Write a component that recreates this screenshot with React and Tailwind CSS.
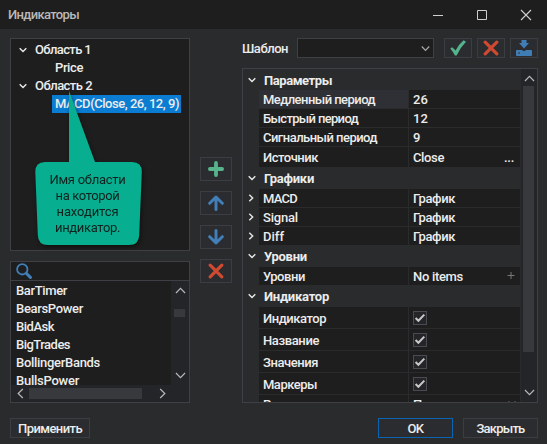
import { useLayoutEffect, useRef } from "react";

// Text whose tracking is adjusted so that it spans exactly `w` pixels.
function T({ w, children, className = "" }) {
  const ref = useRef(null);
  useLayoutEffect(() => {
    const el = ref.current;
    el.style.letterSpacing = "0px";
    const natural = el.getBoundingClientRect().width;
    el.style.letterSpacing = `${(w - natural) / String(children).length}px`;
  }, [w, children]);
  return (
    <span ref={ref} className={`inline-block shrink-0 whitespace-pre ${className}`}>
      {children}
    </span>
  );
}

function Chevron({ dir = "down", size = 8, color = "#e8e8e8", sw = 1.4 }) {
  const d = {
    down: "M0.7 2.2 L4 5.6 L7.3 2.2",
    up: "M0.7 5.8 L4 2.4 L7.3 5.8",
    right: "M2.3 0.7 L5.7 4 L2.3 7.3",
    left: "M5.7 0.7 L2.3 4 L5.7 7.3",
  }[dir];
  return (
    <svg width={size} height={size} viewBox="0 0 8 8" fill="none" stroke={color} strokeWidth={(sw * 8) / size} className="shrink-0">
      <path d={d} />
    </svg>
  );
}

const ScrollArrow = ({ dir }) => <Chevron dir={dir} size={11} color="#b8b8b8" sw={1.2} />;

const Cross = () => (
  <svg width="16" height="16" viewBox="0 0 16 16" stroke="#cf4a30" strokeWidth="3.2" strokeLinecap="round" fill="none">
    <path d="M2.2 2.2 L13.8 13.8 M13.8 2.2 L2.2 13.8" />
  </svg>
);
const Tick = () => (
  <svg width="16" height="16" viewBox="0 0 16 16" fill="#55b38c">
    <path d="M0.3 8.6 L2.2 7.2 L5.6 10.4 Q8.6 4.6 13.6 0.3 L16 1.8 Q10.2 7.6 6.6 15.6 L4.9 15.6 Q3 11.8 0.3 8.6 Z" />
  </svg>
);
const Plus = () => (
  <svg width="16" height="16" viewBox="0 0 16 16" stroke="#58b38c" strokeWidth="3.8" strokeLinecap="round">
    <path d="M8 1.9 V14.1 M1.9 8 H14.1" />
  </svg>
);
const Arrow = ({ down }) => (
  <svg width="16" height="16" viewBox="0 0 16 16" stroke="#427fb8" strokeWidth="3" strokeLinecap="round" strokeLinejoin="round" fill="none" className={down ? "rotate-180" : ""}>
    <path d="M8 14.5 V2.2 M1.7 8.3 L8 2 L14.3 8.3" />
  </svg>
);
const Download = () => (
  <svg width="16" height="16" viewBox="0 0 16 16" fill="#417db5">
    <path d="M5.5 0 H10.5 V3 H13 L8 8.6 L3 3 H5.5 Z" />
    <path d="M0.8 10 H5.8 L8 11.3 L10.2 10 H15.2 Q16 10 16 10.8 V15.2 Q16 16 15.2 16 H0.8 Q0 16 0 15.2 V10.8 Q0 10 0.8 10 Z" />
    <circle cx="3" cy="13" r="0.8" fill="#2a2b2f" />
  </svg>
);

function ToolButton({ className = "", children }) {
  return (
    <div className={`flex items-center justify-center border border-[#3c3d42] bg-[#2b2c30] ${className}`}>{children}</div>
  );
}

function Section({ name, w, h }) {
  return (
    <div className={`flex items-center pl-[5px] ${h}`}>
      <Chevron />
      <T w={w} className="mt-[2px] ml-[8px] font-bold">{name}</T>
    </div>
  );
}

function Check() {
  return (
    <div className="mb-[2px] flex h-[14px] w-[14px] items-center justify-center border border-[#4a4b52] bg-[#242528]">
      <svg width="12" height="12" viewBox="0 0 12 12" fill="none" stroke="#c8c8c8" strokeWidth="2">
        <path d="M1.6 6 L4.4 8.8 L10.3 2.6" />
      </svg>
    </div>
  );
}

function Prop({ name, w, h = "h-[18px]", expand, active, last, children }) {
  return (
    <div className={`flex shrink-0 ${last ? "" : "mb-px"}`}>
      <div className={`flex w-[16px] items-center pl-[4px] ${h}`}>{expand && <Chevron dir="right" />}</div>
      <div className={`mr-px flex w-[149px] items-center pt-[2px] pl-[4px] ${h} ${active ? "bg-[#2f3035]" : "bg-[#1e1e1e]"}`}>
        <T w={w}>{name}</T>
      </div>
      <div className={`flex w-[111px] items-center bg-[#1e1e1e] pt-[2px] pl-[4px] ${h}`}>{children}</div>
    </div>
  );
}

function TreeNode({ name, w }) {
  return (
    <div className="flex h-[18px] items-center pl-[8px]">
      <Chevron />
      <T w={w} className="ml-[8px]">{name}</T>
    </div>
  );
}

const indicators = [
  ["BarTimer", 51],
  ["BearsPower", 67],
  ["BidAsk", 38],
  ["BigTrades", 54],
  ["BollingerBands", 84],
  ["BullsPower", 63],
];

export default function App() {
  return (
    <div className="relative flex h-[444px] w-[547px] flex-col overflow-hidden bg-[#2a2b2d] font-['Roboto','Liberation_Sans',sans-serif] text-[13px] leading-[18px] font-medium text-[#ececec]">
      <header className="flex h-[29px] shrink-0 items-center bg-[#1e1e1e] pr-[14px] pl-[8px]">
        <T w={71} className="mt-px text-[#b9b9b9]">Индикаторы</T>
        <svg width="100" height="12" viewBox="0 0 100 12" fill="none" stroke="#d0d0d0" className="ml-auto">
          <path d="M0 6.5 H10" />
          <path d="M44.5 1.5 H53.5 V10.5 H44.5 Z" />
          <path d="M88 1 L98 11 M98 1 L88 11" strokeWidth="1.1" />
        </svg>
      </header>

      <main className="flex h-[374px] pt-[9px] pl-[10px]">
        <section className="flex w-[180px] flex-col gap-[10px]">
          <div className="h-[213px] shrink-0 border border-[#3f4045] bg-[#1e1e1e] pt-[2px]">
            <TreeNode name="Область 1" w={56} />
            <div className="flex h-[18px] items-center pl-[44px]"><T w={28}>Price</T></div>
            <TreeNode name="Область 2" w={57} />
            <div className="ml-[41px] flex h-[18px] w-[129px] items-center bg-[#0a7dd2] pl-[3px]">
              <T w={124}>MACD(Close, 26, 12, 9)</T>
            </div>
          </div>
          <div className="flex h-[142px] shrink-0 flex-col border border-[#3f4045] bg-[#1e1e1e]">
            <div className="h-[19px] shrink-0 border-b border-[#3f4045] pt-px pl-[5px]">
              <svg width="16" height="16" viewBox="0 0 16 16" fill="none" stroke="#417fb8">
                <circle cx="6.3" cy="6.3" r="5.2" strokeWidth="1.8" />
                <path d="M10.5 10.5 L14.4 14.4" strokeWidth="3" strokeLinecap="round" />
              </svg>
            </div>
            <div className="flex h-[104px] shrink-0">
              <div className="w-[160px] overflow-hidden pl-[5px]">
                {indicators.map(([name, w]) => (
                  <div key={name} className="flex h-[18px] items-center pt-[2px]"><T w={w}>{name}</T></div>
                ))}
              </div>
              <div className="flex w-[18px] flex-col items-center bg-[#242528] py-[4px]">
                <ScrollArrow dir="up" />
                <div className="mt-[13px] mr-[1px] h-[8px] w-[11px] bg-[#38393d]" />
                <div className="mt-auto"><ScrollArrow dir="down" /></div>
              </div>
            </div>
            <div className="flex flex-1 items-center bg-[#242528] pl-[4px]">
              <ScrollArrow dir="left" />
              <div className="ml-[3px] h-[11px] w-[113px] bg-[#38393d]" />
              <div className="ml-[15px]"><ScrollArrow dir="right" /></div>
            </div>
          </div>
        </section>

        <section className="ml-[10px] flex w-[32px] flex-col gap-[10px] pt-[119px]">
          <ToolButton className="h-[24px]"><Plus /></ToolButton>
          <ToolButton className="h-[24px]"><Arrow /></ToolButton>
          <ToolButton className="h-[24px]"><Arrow down /></ToolButton>
          <ToolButton className="h-[24px]"><Cross /></ToolButton>
        </section>

        <section className="ml-[10px] w-[296px]">
          <div className="flex h-[20px] items-center">
            <T w={46} className="mt-[2px]">Шаблон</T>
            <div className="ml-[9px] flex h-[20px] w-[137px] items-center justify-end border border-[#3f4045] bg-[#1e1e1e] pr-[3px]">
              <Chevron size={9} color="#a8a8a8" sw={1.2} />
            </div>
            <ToolButton className="ml-[10px] h-[20px] w-[28px]"><Tick /></ToolButton>
            <ToolButton className="ml-[5px] h-[20px] w-[28px]"><Cross /></ToolButton>
            <ToolButton className="ml-[5px] h-[20px] w-[28px]"><Download /></ToolButton>
          </div>

          <div className="mt-[10px] flex h-[335px] border border-[#3f4045]">
            <div className="flex w-[277px] shrink-0 flex-col overflow-hidden">
              <Section name="Параметры" w={68} h="h-[21px] shrink-0" />
              <Prop name="Медленный период" w={112} active><T w={15}>26</T></Prop>
              <Prop name="Быстрый период" w={95}><T w={15}>12</T></Prop>
              <Prop name="Сигнальный период" w={114}><T w={8}>9</T></Prop>
              <Prop name="Источник" w={55} h="h-[20px]" last>
                <T w={31}>Close</T>
                <T w={10} className="mr-[6px] ml-auto">...</T>
              </Prop>
              <Section name="Графики" w={50} h="h-[22px] shrink-0" />
              <Prop name="MACD" w={34} expand><T w={42}>График</T></Prop>
              <Prop name="Signal" w={35} expand><T w={42}>График</T></Prop>
              <Prop name="Diff" w={21} expand last><T w={42}>График</T></Prop>
              <Section name="Уровни" w={43} h="h-[22px] shrink-0" />
              <Prop name="Уровни" w={42} last>
                <T w={50}>No items</T>
                <svg width="8" height="8" viewBox="0 0 8 8" stroke="#77787b" className="mr-[5px] mb-[2px] ml-auto"><path d="M0.5 3.5 H7.5 M4 0 V7" /></svg>
              </Prop>
              <Section name="Индикатор" w={65} h="h-[22px] shrink-0" />
              <Prop name="Индикатор" w={63} h="h-[21px]"><Check /></Prop>
              <Prop name="Название" w={56} h="h-[21px]"><Check /></Prop>
              <Prop name="Значения" w={55} h="h-[21px]"><Check /></Prop>
              <Prop name="Маркеры" w={54} h="h-[21px]"><Check /></Prop>
              <Prop name="Расположение" w={84}>
                <T w={46}>Панель</T>
                <div className="mr-[4px] mb-[4px] ml-auto"><Chevron color="#77787b" sw={1} /></div>
              </Prop>
            </div>
            <div className="ml-[1px] flex w-[16px] flex-col items-center bg-[#242528] pt-[4px] pb-[4px]">
              <ScrollArrow dir="up" />
              <div className="mt-[2px] mr-[1px] h-[266px] w-[11px] bg-[#38393d]" />
              <div className="mt-auto"><ScrollArrow dir="down" /></div>
            </div>
          </div>
        </section>
      </main>

      <footer className="mt-[15px] flex h-[20px] px-[10px] pr-[9px]">
        <ToolButton className="w-[80px] pt-[2px]"><T w={64}>Применить</T></ToolButton>
        <div className="ml-auto flex w-[75px] items-center justify-center border border-[#0c64b0] bg-[#2b2c30] pt-[2px]">
          <T w={16}>OK</T>
        </div>
        <ToolButton className="ml-[10px] w-[75px] pt-[2px]"><T w={48}>Закрыть</T></ToolButton>
      </footer>

      <div className="absolute top-[88px] left-[32px] h-[164px] w-[114px] drop-shadow-[1px_2px_2px_rgba(0,0,0,0.5)]">
        <svg width="114" height="164" viewBox="0 0 114 164" fill="#08ae90" className="absolute inset-0">
          <path d="M37 3 L63 74 H100 Q110 74 109.8 84 L107.2 147 Q107 157 97 157 H16 Q6 157 5.8 147 L3.3 84 Q3.3 74 13 74 H37 Z" />
        </svg>
        <div className="relative flex flex-col items-center pt-[84px] pr-[3px] text-[13px] leading-[16px] font-normal text-[#10221e]">
          <T w={76}>Имя области</T>
          <T w={64}>на которой</T>
          <T w={62}>находится</T>
          <T w={65}>индикатор.</T>
        </div>
      </div>
    </div>
  );
}
